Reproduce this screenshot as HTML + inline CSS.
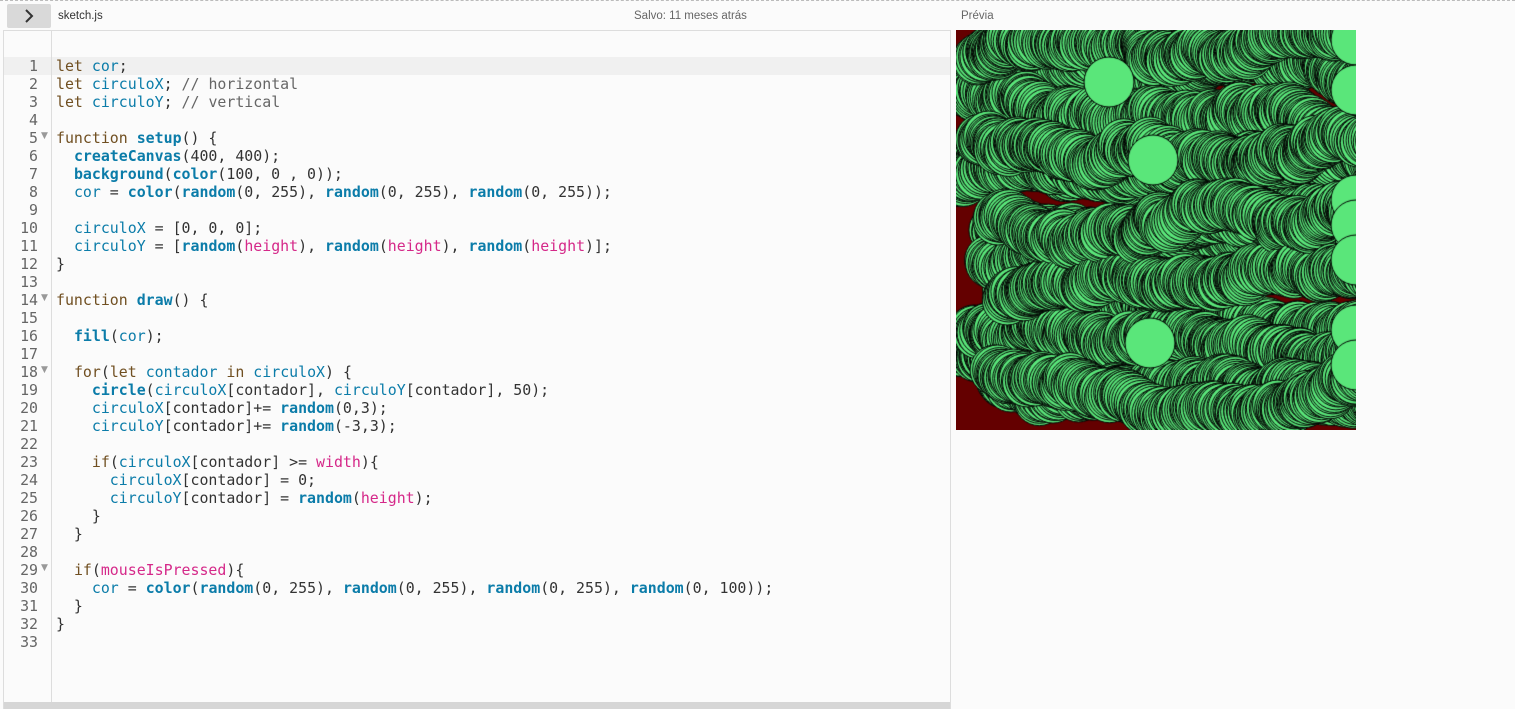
<!DOCTYPE html>
<html><head><meta charset="utf-8"><style>
html,body{margin:0;padding:0;width:1515px;height:709px;overflow:hidden;background:#fbfbfb;font-family:"Liberation Sans",sans-serif;}
.top{position:absolute;left:0;top:0;width:1515px;height:30px;border-top:1px dashed #bbb;box-sizing:border-box;}
.btn{position:absolute;left:7px;top:3px;width:44px;height:24px;background:#d9d9d9;border-radius:2px;}
.t{position:absolute;top:9px;font-size:11.5px;color:#333;}
.ed{position:absolute;left:3px;top:30px;width:948px;height:679px;border:1px solid #ddd;border-bottom:none;box-sizing:border-box;background:#fbfbfb;}
.gut{position:absolute;left:47px;top:0;bottom:0;border-left:1px solid #ddd;}
.hl{position:absolute;left:0;top:26px;width:946px;height:18px;background:#f0f0f0;}
.sb{position:absolute;left:0;bottom:0;width:946px;height:7px;background:#d6d6d6;}
pre{margin:0;position:absolute;top:26px;font-family:"DejaVu Sans Mono","Liberation Mono",monospace;font-size:14.9px;line-height:18px;color:#333;}
.ln{left:0;width:34px;text-align:right;color:#666;}
.code{left:52px;}
.k{color:#704f21}.v{color:#0b7ca9}.f{color:#0b7ca9;font-weight:bold}.p{color:#d52889}.c{color:#666}
.fold{position:absolute;left:37px;color:#999;font-size:9px;font-family:"DejaVu Sans",sans-serif;}
canvas{position:absolute;left:956px;top:30px;}
</style></head><body>
<div class="top">
<div class="btn"><svg width="44" height="24"><path d="M19 6 L25 12 L19 18" fill="none" stroke="#333" stroke-width="2"/></svg></div>
<div class="t" style="left:58px">sketch.js</div>
<div class="t" style="left:634px;color:#666">Salvo: 11 meses atrás</div>
<div class="t" style="left:961px;color:#666">Prévia</div>
</div>
<div class="ed">
<div class="hl"></div>
<div class="gut"></div>
<pre class="ln">1
2
3
4
5
6
7
8
9
10
11
12
13
14
15
16
17
18
19
20
21
22
23
24
25
26
27
28
29
30
31
32
33</pre>
<div class="fold" style="top:100px">▼</div>
<div class="fold" style="top:262px">▼</div>
<div class="fold" style="top:334px">▼</div>
<div class="fold" style="top:532px">▼</div>
<pre class="code"><span class="k">let</span> <span class="v">cor</span>;
<span class="k">let</span> <span class="v">circuloX</span>; <span class="c">// horizontal</span>
<span class="k">let</span> <span class="v">circuloY</span>; <span class="c">// vertical</span>

<span class="k">function</span> <span class="f">setup</span>() {
  <span class="f">createCanvas</span>(400, 400);
  <span class="f">background</span>(<span class="f">color</span>(100, 0 , 0));
  <span class="v">cor</span> = <span class="f">color</span>(<span class="f">random</span>(0, 255), <span class="f">random</span>(0, 255), <span class="f">random</span>(0, 255));

  <span class="v">circuloX</span> = [0, 0, 0];
  <span class="v">circuloY</span> = [<span class="f">random</span>(<span class="p">height</span>), <span class="f">random</span>(<span class="p">height</span>), <span class="f">random</span>(<span class="p">height</span>)];
}

<span class="k">function</span> <span class="f">draw</span>() {

  <span class="f">fill</span>(<span class="v">cor</span>);

  <span class="k">for</span>(<span class="k">let</span> <span class="v">contador</span> <span class="k">in</span> <span class="v">circuloX</span>) {
    <span class="f">circle</span>(<span class="v">circuloX</span>[contador], <span class="v">circuloY</span>[contador], 50);
    <span class="v">circuloX</span>[contador]+= <span class="f">random</span>(0,3);
    <span class="v">circuloY</span>[contador]+= <span class="f">random</span>(-3,3);

    <span class="k">if</span>(<span class="v">circuloX</span>[contador] &gt;= <span class="p">width</span>){
      <span class="v">circuloX</span>[contador] = 0;
      <span class="v">circuloY</span>[contador] = <span class="f">random</span>(<span class="p">height</span>);
    }
  }

  <span class="k">if</span>(<span class="p">mouseIsPressed</span>){
    <span class="v">cor</span> = <span class="f">color</span>(<span class="f">random</span>(0, 255), <span class="f">random</span>(0, 255), <span class="f">random</span>(0, 255), <span class="f">random</span>(0, 100));
  }
}
</pre>
<div class="sb"></div>
</div>
<canvas id="cv" width="400" height="400"></canvas>
<script>
var c=document.getElementById('cv').getContext('2d');
c.fillStyle='#640000';c.fillRect(0,0,400,400);
var s=12345;function r(a,b){s=(s*1103515245+12345)%2147483648;return a+(b-a)*s/2147483648;}
var ys=[40,130,200,260,320,60,230,150,300,350,30,110,190,270,340];
var yi=0;
var X=[0,0,0],Y=[0,0,0];
for(var pass=0;pass<5;pass++){
 for(var k=0;k<3;k++){X[k]=r(0,60);Y[k]=ys[(yi++)%ys.length];}
 for(var f=0;f<300;f++){
  for(var k=0;k<3;k++){
   c.beginPath();c.arc(X[k],Y[k],25,0,7);c.fillStyle='#5ae67a';c.fill();c.strokeStyle='#000';c.lineWidth=1;c.stroke();
   X[k]+=r(0,3);Y[k]+=r(-3,3);if(Y[k]<0)Y[k]+=4;if(Y[k]>400)Y[k]-=4;
  }
 }
}
var fin=[[153,52],[197,130],[194,313],[400,10],[400,60],[400,170],[400,195],[400,230],[400,300],[400,335]];
for(var i=0;i<fin.length;i++){c.beginPath();c.arc(fin[i][0],fin[i][1],25,0,7);c.fillStyle='#5ae67a';c.fill();c.stroke();}
</script>
</body></html>
